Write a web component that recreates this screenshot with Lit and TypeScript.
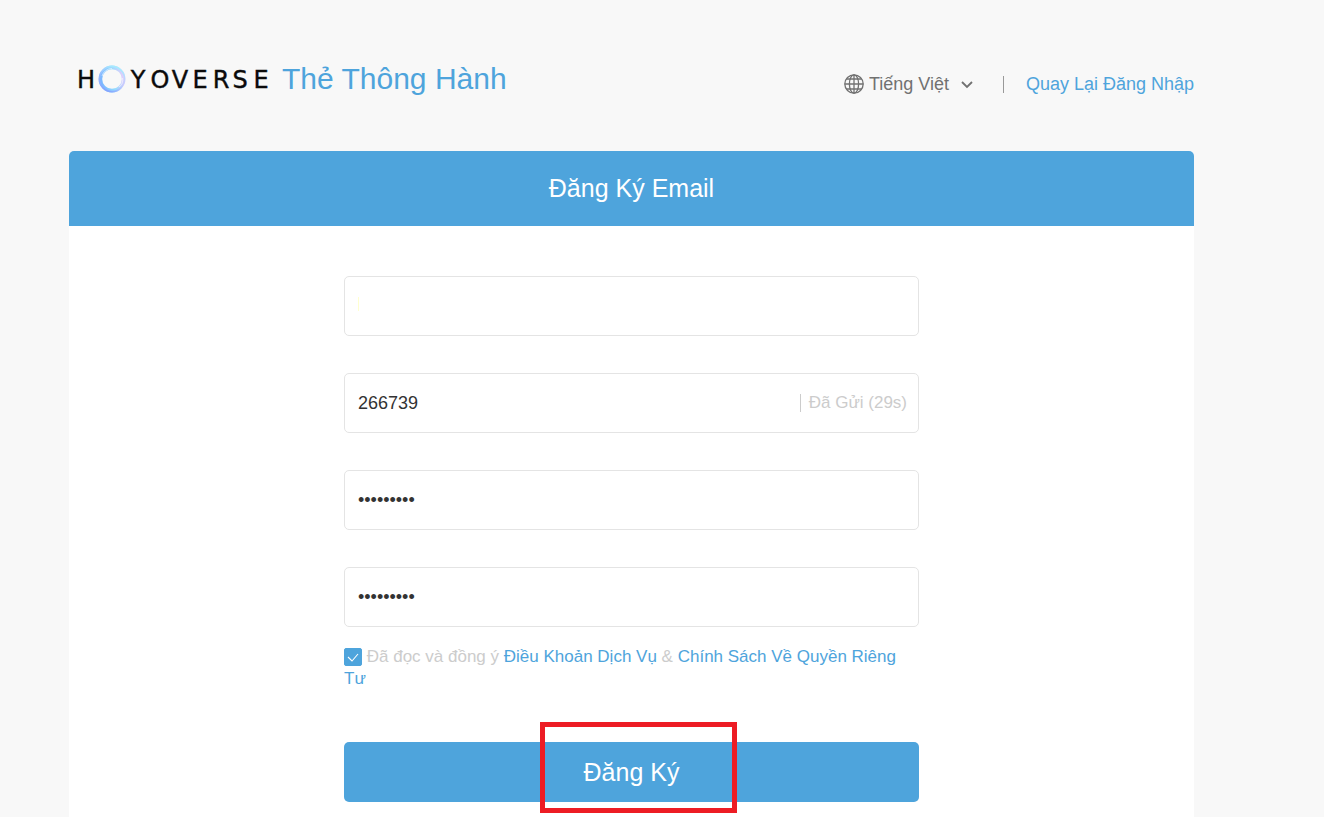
import { LitElement, html, css } from "lit";
import { customElement, state } from "lit/decorators.js";

@customElement("hoyo-logo")
class HoyoLogo extends LitElement {
  static styles = css`
    :host { display: block; }
    svg { display: block; }
    .word {
      font-family: "DejaVu Sans", sans-serif;
      font-size: 24px;
      fill: #0b0b0b;
      stroke: #0b0b0b;
      stroke-width: 0.4px;
      text-anchor: middle;
    }
  `;
  render() {
    return html`
      <svg width="194" height="30" viewBox="0 0 194 30" role="img" aria-label="HOYOVERSE">
        <defs>
          <linearGradient id="ring" x1="0" y1="0.6" x2="1" y2="0.4">
            <stop offset="0" stop-color="#79b4ff" />
            <stop offset="0.55" stop-color="#94dcff" />
            <stop offset="1" stop-color="#e4cdfb" />
          </linearGradient>
          <linearGradient id="glow" x1="0.2" y1="1" x2="0.7" y2="0">
            <stop offset="0" stop-color="#7d9dff" />
            <stop offset="0.5" stop-color="#b5c4ff" stop-opacity="0.4" />
            <stop offset="1" stop-color="#a4f0ff" />
          </linearGradient>
        </defs>
        <text class="word" y="24" x="10">H</text>
        <circle cx="36" cy="15" r="11.6" fill="none" stroke="url(#ring)" stroke-width="3.6" />
        <circle cx="36" cy="15" r="12.6" fill="none" stroke="url(#glow)" stroke-width="1.6" />
        <path d="M26 12a10.500 10.500 0 0 1 10-7.500M46.500 14q1 6-3.500 9" fill="none" stroke="#f2f3ff" stroke-width=".7" />
        <text class="word" y="24" x="62 84 104 124 145 164 185">YOVERSE</text>
      </svg>
    `;
  }
}

@customElement("app-root")
class AppRoot extends LitElement {
  @state() private agreed = true;

  static styles = css`
    :host {
      display: block;
      font-family: "Liberation Sans", Arial, sans-serif;
      font-size: 17px;
      line-height: 22px;
      color: #333;
    }
    * { box-sizing: border-box; }
    a { color: #4ea4dc; text-decoration: none; }
    input, button, select { font: inherit; color: inherit; margin: 0; }
    .page {
      min-height: 100vh;
      padding: 0 130px 0 69px;
      background: #f8f8f8;
      display: flex;
      flex-direction: column;
    }
    .header {
      display: flex;
      align-items: flex-start;
      justify-content: space-between;
      padding: 59px 0 52px 7px;
    }
    .brand { display: flex; align-items: center; gap: 12px; height: 40px; }
    .brand-title { margin: 0; font-size: 30px; line-height: 40px; font-weight: 400; color: #4ea4dc; }
    .nav { display: flex; align-items: center; padding-top: 14px; color: #717171; font-size: 18px; }
    .lang { display: flex; align-items: center; gap: 5px; }
    .globe { display: block; }
    .select { appearance: none; border: 0; padding: 0; background: none; outline: none; }
    .chevron { display: block; margin-left: 6px; }
    .divider { width: 1px; height: 17px; margin: 0 22px 0 30px; background: #999; }
    .card { flex: 1; background: #fff; border-radius: 5px 5px 0 0; overflow: hidden; }
    .card-title {
      margin: 0;
      background: #4ea4dc;
      color: #fff;
      font-size: 25px;
      line-height: 75px;
      font-weight: 400;
      text-align: center;
    }
    .form { max-width: 575px; margin: 0 auto; padding: 50px 0 15px; }
    .fields { display: grid; gap: 37px; }
    .field {
      display: flex;
      align-items: center;
      height: 60px;
      padding: 0 11px 0 13px;
      border: 1px solid #e4e4e4;
      border-radius: 5px;
      background: #fff;
      font-size: 18px;
    }
    .input { flex: 1; min-width: 0; height: 100%; padding: 0; border: 0; outline: none; background: none; }
    .email { background: linear-gradient(#ffffd0, #ffffd0) no-repeat 0 20px / 1px 14px; }
    .send { border: 0; border-left: 1px solid #ccc; padding: 0 0 0 8px; background: none; color: #ccc; font-size: 17px; line-height: 18px; }
    .terms { margin: 19px 0 52px; color: #ccc; }
    .check { position: relative; display: inline-block; width: 18px; height: 18px; vertical-align: -4px; }
    .box { appearance: none; display: block; width: 18px; height: 18px; border: 1px solid #4ea4dc; border-radius: 2px; }
    .box:checked { background: #4ea4dc; }
    .tick { position: absolute; inset: 0; pointer-events: none; }
    .action { position: relative; }
    .submit {
      display: block;
      width: 100%;
      height: 60px;
      border: 0;
      border-radius: 5px;
      background: #4ea4dc;
      color: #fff;
      font-size: 25px;
    }
    .highlight {
      position: absolute;
      top: -20px;
      left: 196px;
      width: 197px;
      height: 91px;
      border: 5px solid #ed1c24;
      pointer-events: none;
    }
  `;

  render() {
    return html`
      <div class="page">
        <header class="header">
          <div class="brand">
            <hoyo-logo></hoyo-logo>
            <h1 class="brand-title">Thẻ Thông Hành</h1>
          </div>
          <nav class="nav">
            <label class="lang">
              <svg class="globe" width="20" height="20" viewBox="0 0 20 20" fill="none" stroke="#717171" stroke-width="1.3">
                <circle cx="10" cy="10" r="9.2" />
                <ellipse cx="10" cy="10" rx="4.600" ry="9.2" />
                <path d="M10 .8v18.400M.8 10h18.400M2.500 5h15M2.500 15h15" />
              </svg>
              <select class="select" aria-label="Ngôn ngữ">
                <option selected>Tiếng Việt</option>
              </select>
              <svg class="chevron" width="12" height="10" viewBox="0 0 12 10" fill="none" stroke="#717171" stroke-width="1.8">
                <path d="M1 3l5 5 5-5" />
              </svg>
            </label>
            <span class="divider"></span>
            <a href="#login">Quay Lại Đăng Nhập</a>
          </nav>
        </header>
        <main class="card">
          <h2 class="card-title">Đăng Ký Email</h2>
          <form class="form" @submit=${(e: Event) => e.preventDefault()}>
            <div class="fields">
              <div class="field">
                <input class="input email" type="email" aria-label="Email" />
              </div>
              <div class="field">
                <input class="input" type="text" inputmode="numeric" aria-label="Mã xác nhận" .value=${"266739"} />
                <button class="send" type="button">Đã Gửi (29s)</button>
              </div>
              <div class="field">
                <input class="input" type="password" aria-label="Mật khẩu" .value=${"abcdefghi"} />
              </div>
              <div class="field">
                <input class="input" type="password" aria-label="Xác nhận mật khẩu" .value=${"abcdefghi"} />
              </div>
            </div>
            <div class="terms">
              <span class="check">
                <input
                  id="agree"
                  class="box"
                  type="checkbox"
                  .checked=${this.agreed}
                  @change=${(e: Event) => (this.agreed = (e.target as HTMLInputElement).checked)}
                />
                <svg class="tick" width="18" height="18" viewBox="0 0 18 18" fill="none" stroke="#fff" stroke-width="1.1">
                  <path d="M4 9l4 4 6-7" />
                </svg>
              </span>
              <label for="agree">Đã đọc và đồng ý</label>
              <a href="#terms">Điều Khoản Dịch Vụ</a> &amp;
              <a href="#privacy">Chính Sách Về Quyền Riêng Tư</a>
            </div>
            <div class="action">
              <button class="submit" type="submit">Đăng Ký</button>
              <span class="highlight"></span>
            </div>
          </form>
        </main>
      </div>
    `;
  }
}
